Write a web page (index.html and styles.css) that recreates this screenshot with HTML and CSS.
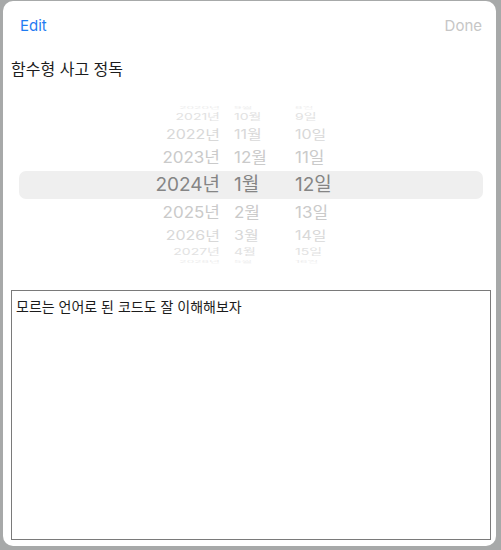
FILE: index.html
```html
<!DOCTYPE html>
<html lang="ko">
<head>
    <meta charset="UTF-8">
    <meta name="viewport" content="width=device-width, initial-scale=1.0">
    <title>함수형 사고 정독</title>
    <link rel="stylesheet" href="styles.css">
</head>
<body>
    <div class="sheet">
        <!-- nav bar -->
        <div class="nav">
            <span class="nav-edit">Edit</span>
            <span class="nav-done">Done</span>
        </div>

        <div class="title">함수형 사고 정독</div>

        <!-- date wheel -->
        <div class="picker">
            <div class="row r4"><span class="y">2020년</span><span class="m">9월</span><span class="d">8일</span></div>
            <div class="row r3"><span class="y">2021년</span><span class="m">10월</span><span class="d">9일</span></div>
            <div class="row r2"><span class="y">2022년</span><span class="m">11월</span><span class="d">10일</span></div>
            <div class="row r1"><span class="y">2023년</span><span class="m">12월</span><span class="d">11일</span></div>
            <div class="row sel"><span class="y">2024년</span><span class="m">1월</span><span class="d">12일</span></div>
            <div class="row r1"><span class="y">2025년</span><span class="m">2월</span><span class="d">13일</span></div>
            <div class="row r2"><span class="y">2026년</span><span class="m">3월</span><span class="d">14일</span></div>
            <div class="row r3"><span class="y">2027년</span><span class="m">4월</span><span class="d">15일</span></div>
            <div class="row r4"><span class="y">2028년</span><span class="m">5월</span><span class="d">16일</span></div>
        </div>

        <textarea class="memo">모르는 언어로 된 코드도 잘 이해해보자</textarea>
    </div>
</body>
</html>
```

FILE: styles.css
```css
html, body {
    margin: 0;
    height: 100%;
}
body {
    background: #a7a9a9;
    font-family: Inter, "Noto Sans CJK KR", sans-serif;
    overflow: hidden;
}
.sheet {
    margin: 1px 5px 0 3px;
    height: 545px;
    background: #fff;
    border-radius: 10px;
    display: flex;
    flex-direction: column;
}
.nav {
    height: 48px;
    display: flex;
    align-items: center;
    justify-content: space-between;
    padding: 0 14px 0 17px;
    font-size: 15px;
}
.nav-edit {
    color: #1f7cf2;
}
.nav-done {
    color: #c6c6c6;
}
.title {
    height: 40px;
    line-height: 40px;
    padding-left: 8px;
    font-size: 16px;
    color: #1c1c1c;
}
.picker {
    margin: 16px 13px 0 16px;
    height: 159px;
    display: flex;
    flex-direction: column;
    justify-content: center;
}
.row {
    flex: none;
    display: flex;
    align-items: center;
    white-space: nowrap;
    line-height: 1;
}
.row .y {
    width: 201px;
    text-align: right;
}
.row .m {
    width: 61px;
    margin-left: 14px;
}
.row span {
    display: inline-block;
}
.sel {
    height: 28px;
    background: #efefef;
    border-radius: 7px;
    font-size: 19px;
    color: #858585;
}
.r1 {
    height: 27px;
    font-size: 17px;
    color: #cacaca;
}
.r1 span { transform: scaleY(0.92); }
.r2 {
    height: 19px;
    font-size: 16px;
    color: #d8d8d8;
}
.r2 span { transform: scaleY(0.8); }
.r3 {
    height: 15px;
    font-size: 14px;
    color: #e2e2e2;
}
.r3 span { transform: scaleY(0.62); }
.r4 {
    height: 4px;
    font-size: 12px;
    color: #ededed;
}
.r4 span { transform: scaleY(0.25); }
.memo {
    margin: 26px 5px 0 8px;
    height: 250px;
    box-sizing: border-box;
    border: 1px solid #7a7a7a;
    padding: 5px 4px;
    font-family: "Noto Sans CJK KR", sans-serif;
    font-size: 14px;
    color: #1c1c1c;
    resize: none;
    outline: none;
}
```
